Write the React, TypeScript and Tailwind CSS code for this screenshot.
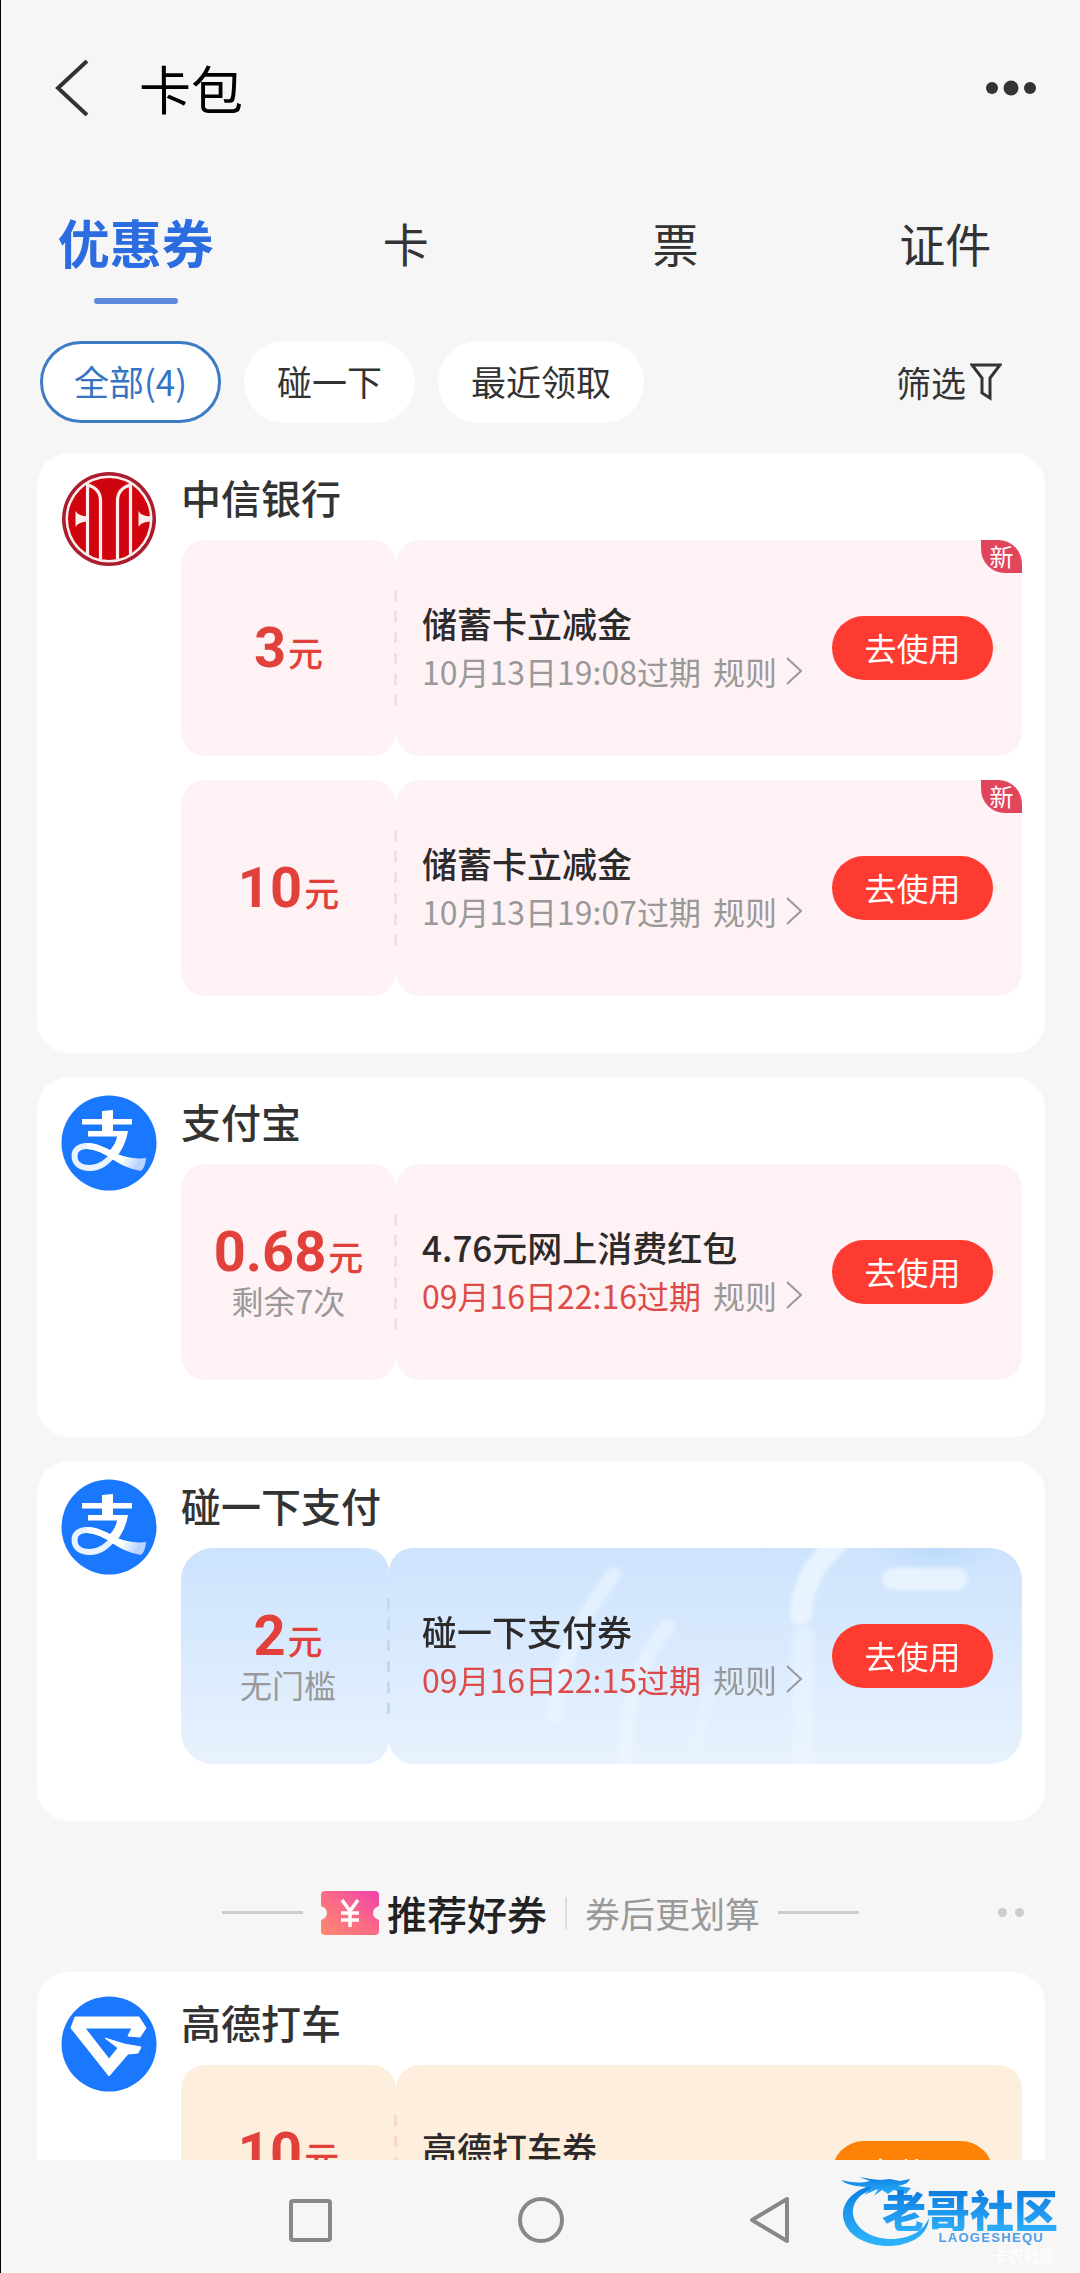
import React from 'react';

type Tone = 'pink' | 'blue' | 'orange';

interface CouponData {
  amount: string;
  note?: string;
  title: string;
  expiry: string;
  urgent?: boolean;
  isNew?: boolean;
  tone: Tone;
}

interface Merchant {
  name: string;
  logo: React.ReactNode;
  coupons: CouponData[];
}

const CiticLogo: React.FC = () => (
  <svg viewBox="0 0 96 96" className="w-24 h-24 shrink-0" aria-hidden="true">
    <circle cx="48" cy="48" r="47" fill="#a91d2c" />
    <circle cx="48" cy="48" r="43.500" fill="#fdeeee" />
    <circle cx="48" cy="48" r="41" fill="#d0040f" />
    <g fill="none" stroke="#fdeeee" strokeWidth="3.200">
      <path d="M26.500 12V84" />
      <path d="M69.500 12V84" />
      <path d="M26.500 14C34 16 39.500 20 39.500 30V88" />
      <path d="M69.500 14C62 16 56.500 20 56.500 30V88" />
    </g>
    <path d="M14.500 40C17 44 21 45 26 45.500V50.500C21 51 17 52 14.500 56Z" fill="#fdeeee" />
    <path d="M77.500 40C80 44 83 45 90 45.500V50.500C83 51 80 52 77.500 56Z" fill="#fdeeee" />
  </svg>
);

const AlipayLogo: React.FC = () => (
  <svg viewBox="0 0 96 96" className="w-24 h-24 shrink-0" aria-hidden="true">
    <defs>
      <linearGradient id="ribbon" x1="0" y1="0" x2="1" y2="0.300">
        <stop offset="0" stopColor="#fff" />
        <stop offset="0.700" stopColor="#fff" />
        <stop offset="1" stopColor="#b9d3fb" />
      </linearGradient>
    </defs>
    <circle cx="48" cy="48" r="47.500" fill="#1a78ff" />
    <path d="M41 16L52 15V24H71V29.500H52V36H67C65 48 60 57 53 65L45 59C51 54 55 48 56 41.500H27V36H41V29.500H21V24H41Z" fill="#fff" />
    <path d="M54 57C47 67 38 73 29 73C19 73 13.500 68 13.500 61C13.500 54 19 51 26 51C33 51 40 54 48 58" fill="none" stroke="#e9f2ff" strokeWidth="6" />
    <path d="M26 48C38 47 50 57 62 61C70 63 77 64 85 63C85 68 83 73 80 76C68 74 58 69 48 62C40 57 33 54 26 54Z" fill="url(#ribbon)" />
  </svg>
);

const GaodeLogo: React.FC = () => (
  <svg viewBox="0 0 96 96" className="w-24 h-24 shrink-0" aria-hidden="true">
    <circle cx="48" cy="48" r="47.500" fill="#1a78ff" />
    <path
      d="M14 21H78L85 32L79 41L67 40L71 32H24L48 63L57 52L44 42L63 48L80 51L77 57L67 58L48 80L10 32Z"
      fill="#fff"
      stroke="#fff"
      strokeWidth="1"
      strokeLinejoin="round"
    />
  </svg>
);

const merchants: Merchant[] = [
  {
    name: '中信银行',
    logo: <CiticLogo />,
    coupons: [
      { amount: '3', title: '储蓄卡立减金', expiry: '10月13日19:08过期', isNew: true, tone: 'pink' },
      { amount: '10', title: '储蓄卡立减金', expiry: '10月13日19:07过期', isNew: true, tone: 'pink' },
    ],
  },
  {
    name: '支付宝',
    logo: <AlipayLogo />,
    coupons: [
      { amount: '0.68', note: '剩余7次', title: '4.76元网上消费红包', expiry: '09月16日22:16过期', urgent: true, tone: 'pink' },
    ],
  },
  {
    name: '碰一下支付',
    logo: <AlipayLogo />,
    coupons: [
      { amount: '2', note: '无门槛', title: '碰一下支付券', expiry: '09月16日22:15过期', urgent: true, tone: 'blue' },
    ],
  },
];

const recommended: Merchant = {
  name: '高德打车',
  logo: <GaodeLogo />,
  coupons: [{ amount: '10', note: '无门槛', title: '高德打车券', expiry: '领取后7天内有效', tone: 'orange' }],
};

const leftTone = {
  pink: 'w-[215px] rounded-3xl bg-[#fef2f4]',
  blue: 'w-[208px] pl-1.5 rounded-l-[32px] rounded-r-3xl bg-linear-to-b from-[#cce3fd] to-[#e8f2fe]',
  orange: 'w-[215px] rounded-3xl bg-[#feeedd]',
};

const rightTone = {
  pink: 'pl-[26px] rounded-3xl bg-[#fef2f4]',
  blue: 'pl-[33px] rounded-l-3xl rounded-r-[32px] bg-linear-to-b from-[#cde3fd] to-[#e8f2fe]',
  orange: 'pl-[26px] rounded-3xl bg-[#feeedd]',
};

const dashTone = {
  pink: 'bg-[repeating-linear-gradient(to_bottom,#eddfe3_0_11px,transparent_11px_21px)]',
  blue: 'bg-[repeating-linear-gradient(to_bottom,#c6d8ec_0_11px,transparent_11px_21px)]',
  orange: 'bg-[repeating-linear-gradient(to_bottom,#f6d9cc_0_11px,transparent_11px_21px)]',
};

/* Pale light trails behind the tap-to-pay coupon */
const BlueDecoration: React.FC = () => (
  <svg viewBox="0 0 632 216" className="absolute top-0 right-0 h-full" aria-hidden="true">
    <defs>
      <linearGradient id="trail" x1="0" y1="0" x2="0" y2="216" gradientUnits="userSpaceOnUse">
        <stop offset="0" stopColor="#e6f3ff" />
        <stop offset="1" stopColor="#edf5ff" />
      </linearGradient>
      <radialGradient id="spot">
        <stop offset="0" stopColor="#bcdafb" />
        <stop offset="1" stopColor="#bcdafb" stopOpacity="0" />
      </radialGradient>
      <filter id="soft">
        <feGaussianBlur stdDeviation="2" />
      </filter>
    </defs>
    <ellipse cx="546" cy="0" rx="60" ry="26" fill="url(#spot)" />
    <g fill="none" stroke="url(#trail)" strokeLinecap="round" filter="url(#soft)">
      <path d="M224 26C196 62 172 100 164 168" strokeWidth="15" opacity="0.800" />
      <path d="M278 78C252 110 234 150 236 216" strokeWidth="15" opacity="0.700" />
      <path d="M320 145C314 165 310 180 308 196" strokeWidth="15" opacity="0.500" />
      <path d="M446 -4C420 20 412 44 411 66" strokeWidth="22" />
      <path d="M413 90V216" strokeWidth="22" opacity="0.600" />
      <path d="M503 31H567" strokeWidth="22" />
    </g>
  </svg>
);

const Coupon: React.FC<{ data: CouponData }> = ({ data }) => (
  <article className="relative flex h-[216px]">
    <div className={`flex shrink-0 flex-col items-center justify-center ${leftTone[data.tone]}`}>
      <p className="flex items-baseline gap-0.5 text-[#e2403b]">
        <span className="font-['Roboto',sans-serif] text-[56px] leading-[56px] font-bold">{data.amount}</span>
        <span className="text-[35px] leading-[35px] font-medium">元</span>
      </p>
      {data.note && <p className="text-[32px] leading-[40px] text-[#999]">{data.note}</p>}
    </div>
    <div className={`relative flex flex-1 items-center justify-between pr-[29px] ${rightTone[data.tone]}`}>
      {data.tone === 'blue' && <BlueDecoration />}
      <span className={`absolute -left-0.5 top-[50px] h-[116px] w-[3px] ${dashTone[data.tone]}`} />
      <div className="relative pb-[3px]">
        <h3 className="text-[35px] leading-[48px] font-medium text-[#2d2a2c]">{data.title}</h3>
        <p className="flex items-center text-[32px] leading-[48px] text-[#999]">
          <span className={data.urgent ? 'text-[#dd4a48]' : ''}>{data.expiry}</span>
          <a href="#" className="ml-3 flex items-center">
            规则
            <svg viewBox="0 0 18 28" className="ml-2 h-7 w-[18px]" fill="none" stroke="#999" strokeWidth="2" aria-hidden="true">
              <path d="M2 1L16 14L2 27" />
            </svg>
          </a>
        </p>
      </div>
      <button
        className={`relative h-16 w-[161px] rounded-full pb-0.5 text-[32px] text-white ${
          data.tone === 'orange' ? 'bg-[#fd8205]' : 'bg-[#fe3b30]'
        }`}
      >
        去使用
      </button>
    </div>
    {data.isNew && (
      <span className="absolute right-0 top-0 flex h-[33px] w-[41px] items-center justify-center rounded-tr-3xl rounded-bl-3xl bg-[#e0455c] pb-0.5 text-2xl text-white">
        新
      </span>
    )}
  </article>
);

const MerchantCard: React.FC<{ merchant: Merchant; roomy?: boolean }> = ({ merchant, roomy }) => (
  <section
    className={`ml-9 mr-[35px] flex gap-6 rounded-[32px] bg-white pb-[57px] pl-6 pr-[23px] ${roomy ? 'pt-6' : 'pt-[18px]'}`}
  >
    {merchant.logo}
    <div className="flex-1">
      <h2 className="mb-[17px] text-[40px] leading-[52px] font-medium text-[#333]">{merchant.name}</h2>
      <div className="flex flex-col gap-6">
        {merchant.coupons.map((coupon, index) => (
          <Coupon key={index} data={coupon} />
        ))}
      </div>
    </div>
  </section>
);

const Watermark: React.FC = () => (
  <div className="absolute right-4 top-2 h-[100px] w-[224px]">
    <svg viewBox="0 0 224 100" className="absolute inset-0 h-full w-full" aria-hidden="true">
      <defs>
        <linearGradient id="dragon" x1="0" y1="0" x2="0" y2="1">
          <stop offset="0" stopColor="#0d7fe2" />
          <stop offset="1" stopColor="#2fb4fb" />
        </linearGradient>
      </defs>
      <g fill="url(#dragon)">
        <path d="M38 16C14 20 2 34 3 48C5 68 28 79 52 78C74 76 88 66 89 50C84 62 72 70 54 71C34 72 15 62 13 46C12 34 20 24 38 20Z" />
        <path d="M1 12C10 14 18 16 30 13L19 9L31 11L40 12L50 11L60 13L70 11C68 16 62 17 58 18L71 20L66 26L54 22L48 26L42 22L34 28L38 21L24 27L32 19C20 19 8 18 1 12Z" />
      </g>
    </svg>
    <p className="absolute left-[42px] top-[19px] bg-linear-to-b from-[#0c78dc] to-[#2caefa] bg-clip-text text-[44px] leading-[44px] font-black text-transparent">
      老哥社区
    </p>
    <p className="absolute right-5 top-16 font-['Liberation_Sans',sans-serif] text-[13px] leading-3 font-bold tracking-widest text-[#4f9fe6]">
      LAOGESHEQU
    </p>
    <p className="absolute right-2 top-[77px] text-base leading-5 text-white">卡农社区</p>
  </div>
);

const tabs = ['优惠券', '卡', '票', '证件'];
const filters = ['全部(4)', '碰一下', '最近领取'];

const App: React.FC = () => {
  return (
    <div
      lang="zh-CN"
      className="flex h-screen flex-col overflow-hidden border-l border-black bg-[#f6f6f6] font-['Noto_Sans_CJK_SC',sans-serif] text-[#333]"
    >
      {/* Title bar */}
      <header className="flex h-[176px] shrink-0 items-center pl-[54px] pr-11">
        <button aria-label="返回">
          <svg viewBox="0 0 34 56" className="h-14 w-[34px]" fill="none" stroke="#333" strokeWidth="4" aria-hidden="true">
            <path d="M32 1L3 28L32 55" />
          </svg>
        </button>
        <h1 className="ml-[50px] flex-1 text-[52px] leading-[64px] text-black">卡包</h1>
        <button aria-label="更多">
          <svg viewBox="0 0 50 16" className="h-4 w-[50px]" fill="#333" aria-hidden="true">
            <circle cx="6" cy="8" r="6" />
            <circle cx="25" cy="8" r="7.500" />
            <circle cx="44" cy="8" r="6" />
          </svg>
        </button>
      </header>

      {/* Tabs */}
      <nav className="grid shrink-0 grid-cols-4 pt-[34px]">
        {tabs.map((tab, index) => (
          <a key={tab} href="#" className="flex flex-col items-center">
            <span
              className={
                index === 0
                  ? 'text-[52px] leading-[64px] font-bold text-[#2b6ce0]'
                  : 'text-[46px] leading-[64px]'
              }
            >
              {tab}
            </span>
            <span className={`mt-6 h-1.5 w-[84px] rounded-full ${index === 0 ? 'bg-[#5b8ade]' : ''}`} />
          </a>
        ))}
      </nav>

      {/* Filters */}
      <div className="mt-[37px] mb-[30px] flex shrink-0 items-center gap-[23px] pl-[39px] pr-[78px]">
        {filters.map((filter, index) => (
          <button
            key={filter}
            className={`h-[82px] rounded-full bg-white pb-0.5 text-[35px] ${
              index === 0 ? 'border-3 border-[#3d7cc4] px-[31px] text-[#3574c4]' : 'px-[33px]'
            }`}
          >
            {filter}
          </button>
        ))}
        <button className="ml-auto flex items-center gap-1 text-[35px]">
          筛选
          <svg viewBox="0 0 32 38" className="h-[38px] w-8" fill="none" stroke="#333" strokeWidth="3" aria-hidden="true">
            <path d="M2 2H30L20 15V35L12 30V15Z" />
          </svg>
        </button>
      </div>

      {/* Coupon list */}
      <main className="min-h-0 flex-1 overflow-y-auto [scrollbar-width:none]">
        <div className="flex flex-col gap-6">
          {merchants.map((merchant) => (
            <MerchantCard key={merchant.name} merchant={merchant} />
          ))}
        </div>

        <div className="relative flex h-[151px] items-center justify-center pt-8">
          <span className="h-[3px] w-[81px] bg-[#ccc]" />
          <svg viewBox="0 0 58 44" className="ml-[18px] h-11 w-[58px]" aria-hidden="true">
            <defs>
              <linearGradient id="ticket" x1="0" y1="1" x2="1" y2="0">
                <stop offset="0" stopColor="#fd8a70" />
                <stop offset="0.500" stopColor="#fb6a86" />
                <stop offset="1" stopColor="#f043ac" />
              </linearGradient>
            </defs>
            <path
              d="M4 0H54Q58 0 58 4V15Q52 17 52 22Q52 27 58 29V40Q58 44 54 44H4Q0 44 0 40V29Q6 27 6 22Q6 17 0 15V4Q0 0 4 0Z"
              fill="url(#ticket)"
            />
            <path d="M21 9L29 20L37 9M29 20V36M20 22H38M20 29H38" fill="none" stroke="#fff" strokeWidth="3.500" />
          </svg>
          <h2 className="ml-2 text-[40px] leading-[52px] font-medium text-[#222]">推荐好券</h2>
          <span className="mx-[18px] h-8 w-0.5 bg-[#ddd]" />
          <span className="text-[35px] leading-[52px] text-[#999]">券后更划算</span>
          <span className="ml-[18px] h-[3px] w-[81px] bg-[#ccc]" />
          <span className="absolute right-14 flex gap-2">
            <i className="h-[9px] w-[9px] rounded-full bg-[#ccc]" />
            <i className="h-[9px] w-[9px] rounded-full bg-[#ccc]" />
          </span>
        </div>

        <MerchantCard merchant={recommended} roomy />
      </main>

      {/* System navigation */}
      <footer className="relative h-[113px] shrink-0 bg-[#f6f6f6]">
        <div className="flex h-[120px] items-center justify-center gap-[182px]">
          <button aria-label="最近任务">
            <svg viewBox="0 0 48 48" className="h-12 w-12" fill="none" stroke="#888" strokeWidth="4" aria-hidden="true">
              <rect x="4" y="5" width="39" height="39" rx="2" />
            </svg>
          </button>
          <button aria-label="主屏幕">
            <svg viewBox="0 0 48 48" className="h-12 w-12" fill="none" stroke="#888" strokeWidth="4" aria-hidden="true">
              <circle cx="24" cy="24" r="21" />
            </svg>
          </button>
          <button aria-label="返回上一页">
            <svg viewBox="0 0 48 48" className="h-12 w-12" fill="none" stroke="#888" strokeWidth="4" strokeLinejoin="round" aria-hidden="true">
              <path d="M40 3V45L5 24Z" />
            </svg>
          </button>
        </div>
        <Watermark />
      </footer>
    </div>
  );
};

export default App;
